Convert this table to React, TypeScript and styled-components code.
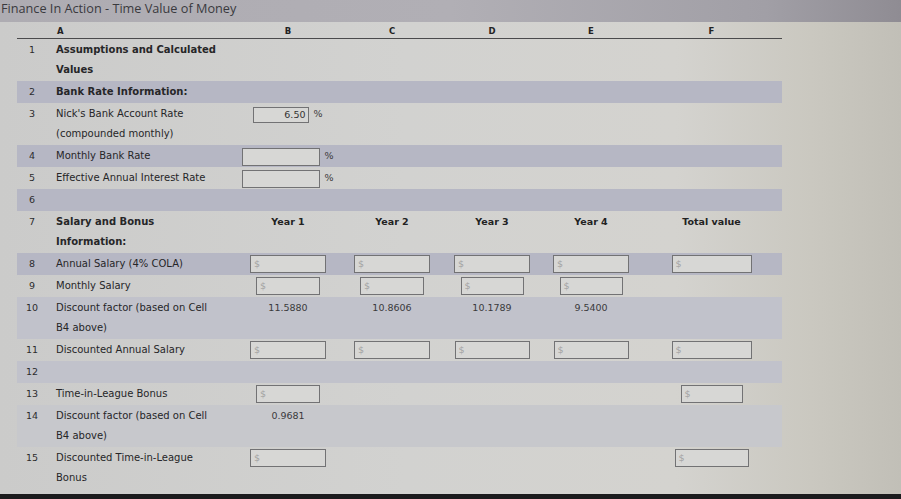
import React from "react";
import styled, { createGlobalStyle } from "styled-components";

const GlobalStyle = createGlobalStyle`
  html, body { margin: 0; padding: 0; }
  body {
    width: 901px;
    height: 499px;
    overflow: hidden;
    font-family: "DejaVu Sans", Verdana, sans-serif;
    background: linear-gradient(to right, #cbcbca 0%, #d2d2d0 45%, #d4d3cf 75%, #cac8c0 90%, #c1bfb7 100%);
  }
`;

const COLS = "30px 188px 106px 102px 98px 100px 141px";

const Page = styled.div`
  width: 901px;
  height: 499px;
  display: flex;
  flex-direction: column;
  overflow: hidden;
`;

const TitleBar = styled.div`
  height: 22px;
  flex: none;
  background: linear-gradient(to right, #aeacb2 0%, #b1afb5 50%, #a19fa6 85%, #8f8c93 100%);
  font-family: "Open Sans", "DejaVu Sans", sans-serif;
  font-size: 12.7px;
  line-height: 16px;
  color: #3a3a3e;
  padding-left: 1px;
  white-space: nowrap;
`;

const Sheet = styled.div`
  margin-left: 17px;
  width: 765px;
  display: flex;
  flex-direction: column;
`;

const HeaderRow = styled.div`
  display: grid;
  grid-template-columns: ${COLS};
  height: 16px;
  border-bottom: 1px solid #4a4a4c;
  align-items: center;
  font-weight: bold;
  font-size: 8.5px;
  color: #222;
`;

const ColLetter = styled.div<{ $left?: boolean }>`
  text-align: ${(p) => (p.$left ? "left" : "center")};
  padding-left: ${(p) => (p.$left ? "10px" : "0")};
  padding-top: 2px;
`;

const bandColor = { strong: "#b6b7c4", soft: "#c1c2cb", faint: "#c7c8cc" } as const;
type Band = keyof typeof bandColor;

const Row = styled.div<{ $band?: Band }>`
  display: grid;
  grid-template-columns: ${COLS};
  background: ${(p) => (p.$band ? bandColor[p.$band] : "transparent")};
  padding: 1px 0;
  font-size: 10px;
  line-height: 20px;
  color: #262628;
`;

const RowNum = styled.div`
  text-align: center;
  color: #2c2c2e;
  font-size: 9.5px;
`;

const Label = styled.div<{ $bold?: boolean }>`
  padding-left: 9px;
  font-weight: ${(p) => (p.$bold ? "bold" : "normal")};
  white-space: nowrap;
`;

const Cell = styled.div`
  display: flex;
  justify-content: center;
  align-items: flex-start;
  height: 20px;
`;

const Group = styled.div`
  display: flex;
  align-items: center;
  gap: 4px;
  height: 20px;
`;

const Box = styled.div<{ $w: number }>`
  box-sizing: border-box;
  width: ${(p) => p.$w}px;
  height: 18px;
  margin-top: 1px;
  border: 1px solid #727274;
  background: #d7d7d5;
  font-size: 9.5px;
  line-height: 16px;
  color: #a2a2a2;
  padding: 0 3px;
`;

const ValueBox = styled(Box)`
  text-align: right;
  color: #333;
  height: 16px;
  margin-top: 2px;
  line-height: 14px;
`;

const Pct = styled.span`
  color: #3a3a3a;
  font-size: 9.5px;
`;

const Value = styled.div`
  color: #3a3a3c;
  font-size: 9.5px;
`;

const Head = styled.div`
  font-weight: bold;
  color: #222;
  font-size: 9.5px;
`;

const BottomBar = styled.div`
  margin-top: auto;
  height: 5px;
  flex: none;
  background: #1b1b1d;
`;

type CellSpec =
  | { kind: "box"; w: number }
  | { kind: "pct"; w: number; text?: string }
  | { kind: "value"; text: string }
  | { kind: "head"; text: string }
  | null;

type RowSpec = {
  num: string;
  lines: string[];
  bold?: boolean;
  band?: Band;
  cells?: CellSpec[];
};

const box = (w: number): CellSpec => ({ kind: "box", w });
const val = (text: string): CellSpec => ({ kind: "value", text });
const head = (text: string): CellSpec => ({ kind: "head", text });

const rows: RowSpec[] = [
  { num: "1", lines: ["Assumptions and Calculated", "Values"], bold: true },
  { num: "2", lines: ["Bank Rate Information:"], bold: true, band: "strong" },
  {
    num: "3",
    lines: ["Nick's Bank Account Rate", "(compounded monthly)"],
    cells: [{ kind: "pct", w: 56, text: "6.50" }],
  },
  { num: "4", lines: ["Monthly Bank Rate"], band: "strong", cells: [{ kind: "pct", w: 78 }] },
  { num: "5", lines: ["Effective Annual Interest Rate"], cells: [{ kind: "pct", w: 78 }] },
  { num: "6", lines: [""], band: "strong" },
  {
    num: "7",
    lines: ["Salary and Bonus", "Information:"],
    bold: true,
    cells: [head("Year 1"), head("Year 2"), head("Year 3"), head("Year 4"), head("Total value")],
  },
  {
    num: "8",
    lines: ["Annual Salary (4% COLA)"],
    band: "strong",
    cells: [box(76), box(76), box(76), box(76), box(80)],
  },
  { num: "9", lines: ["Monthly Salary"], cells: [box(64), box(64), box(63), box(63), null] },
  {
    num: "10",
    lines: ["Discount factor (based on Cell", "B4 above)"],
    band: "soft",
    cells: [val("11.5880"), val("10.8606"), val("10.1789"), val("9.5400"), null],
  },
  {
    num: "11",
    lines: ["Discounted Annual Salary"],
    cells: [box(76), box(76), box(75), box(75), box(80)],
  },
  { num: "12", lines: [""], band: "soft" },
  { num: "13", lines: ["Time-in-League Bonus"], cells: [box(64), null, null, null, box(62)] },
  {
    num: "14",
    lines: ["Discount factor (based on Cell", "B4 above)"],
    band: "faint",
    cells: [val("0.9681"), null, null, null, null],
  },
  {
    num: "15",
    lines: ["Discounted Time-in-League", "Bonus"],
    cells: [box(76), null, null, null, box(74)],
  },
];

function renderCell(c: CellSpec, i: number) {
  if (!c) return <Cell key={i} />;
  switch (c.kind) {
    case "box":
      return (
        <Cell key={i}>
          <Box $w={c.w}>$</Box>
        </Cell>
      );
    case "pct":
      return (
        <Cell key={i}>
          <Group>
            {c.text ? <ValueBox $w={c.w}>{c.text}</ValueBox> : <Box $w={c.w} />}
            <Pct>%</Pct>
          </Group>
        </Cell>
      );
    case "value":
      return (
        <Cell key={i}>
          <Value>{c.text}</Value>
        </Cell>
      );
    case "head":
      return (
        <Cell key={i}>
          <Head>{c.text}</Head>
        </Cell>
      );
  }
}

export default function App() {
  return (
    <>
      <GlobalStyle />
      <Page>
        <TitleBar>Finance In Action - Time Value of Money</TitleBar>
        <Sheet>
          <HeaderRow>
            <div />
            <ColLetter $left>A</ColLetter>
            <ColLetter>B</ColLetter>
            <ColLetter>C</ColLetter>
            <ColLetter>D</ColLetter>
            <ColLetter>E</ColLetter>
            <ColLetter>F</ColLetter>
          </HeaderRow>
          {rows.map((r) => {
            const cells = r.cells ?? [];
            const filled: CellSpec[] = [0, 1, 2, 3, 4].map((k) => cells[k] ?? null);
            return (
              <Row key={r.num} $band={r.band}>
                <RowNum>{r.num}</RowNum>
                <Label $bold={r.bold}>
                  {r.lines.map((l, k) => (
                    <div key={k}>{l || "\u00a0"}</div>
                  ))}
                </Label>
                {filled.map((c, k) => renderCell(c, k))}
              </Row>
            );
          })}
        </Sheet>
        <BottomBar />
      </Page>
    </>
  );
}
